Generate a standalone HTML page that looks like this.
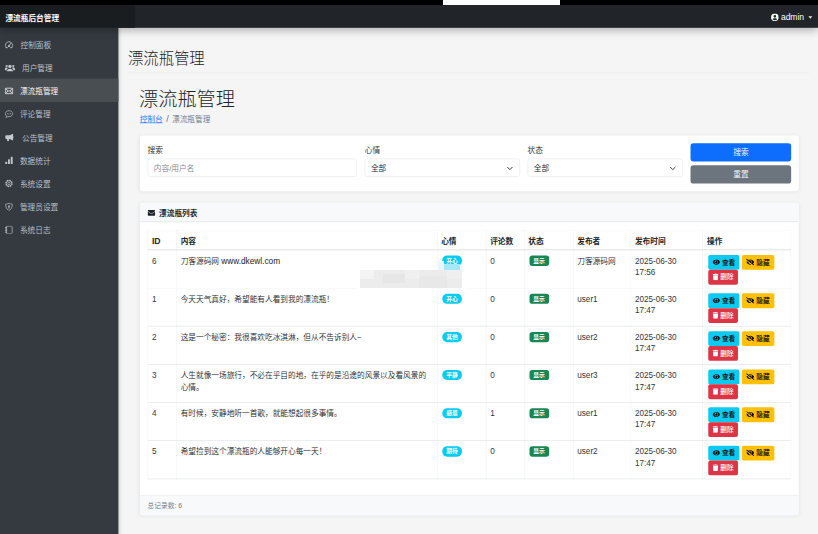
<!DOCTYPE html>
<html lang="zh-CN">
<head>
<meta charset="utf-8">
<title>漂流瓶管理 - 漂流瓶后台管理</title>
<style>
*{box-sizing:border-box}
html,body{margin:0;padding:0;width:818px;height:534px;overflow:hidden;background:#f5f5f5}
body{font-family:"Liberation Sans","Noto Sans CJK SC",sans-serif;font-size:16px;line-height:1.5;color:#212529;font-weight:350}
#app{position:absolute;left:0;top:0;width:1707px;height:1115px;transform:scale(0.4792);transform-origin:0 0;background:#f5f5f5;overflow:hidden}
/* browser strip on very top (target px) */
#strip{position:absolute;left:0;top:0;width:818px;height:5px;background:#000;z-index:50}
#mosaic b{position:absolute;display:block}
#mosaic{position:absolute;left:0;top:0;z-index:40}
#strip i{position:absolute;left:443px;top:0;width:117px;height:5px;background:#fff}
/* top bar */
.topbar{position:absolute;left:0;top:0;width:1707px;height:58.4px;background:#212529;z-index:10;box-shadow:0 4px 20px rgba(0,0,0,.32)}
.brand{position:absolute;left:0;top:0;width:281.7px;height:58.4px;background:#1a1d20;color:#fff;font-weight:700;font-size:16px;line-height:24px;padding:26.5px 0 0 11.3px}
.user{position:absolute;right:12px;top:23.7px;height:24px;color:#fff;font-size:17.8px;line-height:24px;white-space:nowrap}
.user svg{width:16px;height:16px;vertical-align:-2px;margin-right:5px;fill:#fff}
.user .caret{display:inline-block;margin-left:9px;vertical-align:3px;border-top:5px solid #e9ecef;border-left:4.5px solid transparent;border-right:4.5px solid transparent}
/* sidebar */
.sidebar{position:absolute;left:0;top:58.4px;width:246.7px;height:1060px;background:#343a40;padding-top:9.4px;z-index:5;box-shadow:2px 0 8px rgba(0,0,0,.25)}
.sidebar a{display:block;height:48.3px;padding:12.15px 0 0 10.4px;color:#c2c7d0;text-decoration:none;font-size:16px;line-height:24px;white-space:nowrap;position:relative}
.sidebar a.active{background:#494e53;color:#fff}
.sidebar a svg{position:absolute;left:10.4px;top:16.8px;width:17.5px;height:17.5px}
.sidebar a span{position:absolute;left:41.6px;top:15.8px}
.sidebar a.w span{left:45.9px}
.sidebar a.w0 span{left:42.8px}
/* main */
.main{position:absolute;left:246.7px;top:58.4px;width:1460.3px;height:1060px;background:#f5f5f5}

.main h2.pt{position:absolute;left:20.4px;top:41.4px;width:1423px;margin:0;font-size:32px;line-height:38.4px;font-weight:300;color:#212529;padding-top:3px;padding-bottom:9px;border-bottom:1px solid #e7e9eb;height:51.4px;white-space:nowrap}
.main h1{position:absolute;left:43.5px;top:125.1px;margin:0;font-size:40px;line-height:48px;font-weight:300;color:#212529;white-space:nowrap}
.bc{position:absolute;left:45px;top:179.8px;margin:0;padding:0;list-style:none;font-size:16px;line-height:24px;white-space:nowrap;color:#6c757d}
.bc a{color:#0d6efd;text-decoration:underline}
.bc .sep{display:inline-block;padding:0 7px;font-size:19px;line-height:20px}
.card{position:absolute;left:45.3px;width:1375.4px;background:#fff;border-radius:6px;box-shadow:0 1px 9px rgba(0,0,0,.07)}
.c1{top:224.2px;height:116px}
.c2{top:364.6px;height:651.7px}
.fg{position:absolute;top:16px}
.fg label{display:block;height:24px;margin-bottom:8px;font-size:16px;line-height:24px;color:#212529;position:relative;top:4px}
.ctl{height:38px;border:1px solid #dee2e6;border-radius:6px;background:#fff;padding:8.7px 12px 0;font-size:16px;line-height:24px;color:#212529;position:relative;white-space:nowrap}
.ctl.ph{color:#7d858c}
.ctl svg{position:absolute;right:12px;top:11px;width:16px;height:16px;fill:none;stroke:#343a40;stroke-width:2;stroke-linecap:round;stroke-linejoin:round}
.btn{display:block;height:38px;border-radius:6px;color:#fff;text-align:center;font-size:16px;line-height:24px;padding:8.5px 0 0}
.b-p{background:#0d6efd}
.b-s{background:#6c757d;margin-top:8px}
.ch{height:41px;background:#f8f9fa;border-bottom:2px solid #c6cace;border-radius:6px 6px 0 0;padding:10.5px 16px 0;font-weight:700;font-size:16px;line-height:24px;white-space:nowrap}
.ch svg{width:16px;height:16px;vertical-align:-2px;margin-right:8px;fill:#212529}
.cf{position:absolute;left:0;bottom:0;width:100%;height:41px;background:#f8f9fa;border-top:1px solid #c9cdd1;border-radius:0 0 6px 6px;padding:9px 16px 0;font-size:14px;line-height:24px;color:#6c757d}
table{position:absolute;left:16px;top:57px;width:1343.4px;border-collapse:collapse;table-layout:fixed;font-size:16px;line-height:24px;color:#212529}
th,td{border:1px solid #d5d9dd;border-left-color:#eef0f2;border-right-color:#eef0f2;padding:8px;vertical-align:top;text-align:left;overflow:hidden}
th{border-top-color:#f6f7f8;border-bottom-color:#bcc1c6;font-weight:700;height:41px;white-space:nowrap;padding-top:11px;padding-bottom:5px}
td{height:79.6px;padding-top:11px;padding-bottom:0}
td.l{font-size:17px;color:#32373c}
.lat{font-size:17.3px}
.bd{display:inline-block;font-size:12px;line-height:12px;font-weight:700;color:#fff;padding:4.6px 8.5px;border-radius:10px;background:#0dcaf0;vertical-align:1px;white-space:nowrap;position:relative;left:2px;top:-1px}
.bd.g{background:#198754;border-radius:6px}
.ab{font-weight:500;display:inline-block;height:31px;border-radius:4px;padding:5px 9px;font-size:14px;line-height:21px;vertical-align:top;white-space:nowrap;color:#000}
.ab svg{height:14px;vertical-align:-2px;margin-right:4px;fill:currentColor}
.ab.i{background:#0dcaf0}.ab.w{background:#ffc107;padding-right:10px}.ab.d{background:#dc3545;color:#fff}
td.op{line-height:31px;font-size:16px;padding-top:10px;padding-left:10.3px;padding-right:0;white-space:normal}
tbody tr:first-child td{border-bottom-color:#f1f2f4;border-top-color:#bcc1c6}
tbody tr:nth-child(2) td{border-top-color:#f1f2f4}
</style>
</head>
<body>
<div id="app">
  <div class="topbar">
    <div class="brand">漂流瓶后台管理</div>
    <div class="user"><svg viewBox="0 0 16 16"><path d="M8 0a8 8 0 1 0 0 16A8 8 0 0 0 8 0zm0 3.1a2.85 2.85 0 1 1 0 5.7 2.85 2.85 0 0 1 0-5.7zm0 11.1a6.2 6.2 0 0 1-4.75-2.2c.6-1.15 1.8-1.95 3.2-1.95.08 0 .16.01.23.04.42.13.86.22 1.32.22s.9-.09 1.32-.22a.8.8 0 0 1 .23-.04c1.4 0 2.6.8 3.2 1.95A6.2 6.2 0 0 1 8 14.2z"/></svg>admin<i class="caret"></i></div>
  </div>
  <div class="sidebar">
    <a href="#" class="w0"><svg viewBox="0 0 16 16" fill="none" stroke="currentColor" stroke-width="1.4" stroke-linecap="round"><path d="M2.600 13.300a7 7 0 1 1 10.800 0"/><path d="M2.600 13.300h2.600M13.400 13.300h-2.600"/><path d="M7.800 10.200l3-4.800" stroke-width="1.700"/><circle cx="7.800" cy="10.300" r="1.200" fill="currentColor"/></svg><span>控制面板</span></a>
    <a href="#" class="w"><svg viewBox="0 0 20 16" style="width:21.500px" fill="currentColor" stroke="none"><circle cx="10" cy="5" r="3.200"/><path d="M4 14.500c0-3.300 2.400-5 6-5s6 1.700 6 5z"/><circle cx="3.600" cy="4.300" r="2.100"/><circle cx="16.400" cy="4.300" r="2.100"/><path d="M0 11c0-2.300 1.400-3.600 3.600-3.600 1 0 1.800.3 2.400.8-1.600 1-2.500 2.600-2.700 4.300H0zM20 11c0-2.300-1.400-3.600-3.600-3.600-1 0-1.800.3-2.400.8 1.600 1 2.500 2.600 2.700 4.300H20z"/></svg><span>用户管理</span></a>
    <a href="#" class="active"><svg viewBox="0 0 16 16" fill="none" stroke="currentColor" stroke-width="1.400" stroke-linejoin="round"><rect x=".8" y="2.800" width="14.400" height="10.400" rx="1.600"/><path d="M1 4.200l7 4.600 7-4.600M1 12.600l5.200-4.300M15 12.600L9.800 8.300"/></svg><span>漂流瓶管理</span></a>
    <a href="#"><svg viewBox="0 0 16 16" fill="none" stroke="currentColor" stroke-width="1.300" stroke-linejoin="round"><path d="M8 1.800c4 0 7.200 2.500 7.200 5.700S12 13.200 8 13.200c-.7 0-1.400-.1-2-.2-.9.700-2.200 1.300-3.900 1.500.7-.8 1.100-1.700 1.200-2.500C1.800 10.900.8 9.300.8 7.500.8 4.300 4 1.800 8 1.800z"/><g fill="currentColor" stroke="none"><circle cx="4.800" cy="7.500" r="1"/><circle cx="8" cy="7.500" r="1"/><circle cx="11.200" cy="7.500" r="1"/></g></svg><span>评论管理</span></a>
    <a href="#" class="w"><svg viewBox="0 0 18 16" style="width:19.500px" fill="currentColor" stroke="none"><path d="M15 .8c.6 0 1 .4 1 1v4.100a1.500 1.500 0 0 1 0 2.800v4.100c0 .600-.4 1-1 1-.3 0-.5-.1-.7-.3-1.500-1.500-3.700-2.400-6.300-2.600v3.600c0 .600-.4 1-1 1H5.500c-.6 0-1-.4-1-1v-3.600H3a2 2 0 0 1-2-2v-3a2 2 0 0 1 2-2h4c3 0 5.600-.9 7.300-2.700.2-.2.400-.4.700-.4z"/></svg><span>公告管理</span></a>
    <a href="#"><svg viewBox="0 0 16 16" fill="currentColor" stroke="none"><rect x="1" y="10.500" width="3.600" height="4.500" rx=".6"/><rect x="6.200" y="6" width="3.600" height="9" rx=".6"/><rect x="11.400" y="1" width="3.600" height="14" rx=".6"/></svg><span>数据统计</span></a>
    <a href="#"><svg viewBox="0 0 16 16" fill="none" stroke="currentColor"><circle cx="8" cy="8" r="6" stroke-width="2.200" stroke-dasharray="2.700 2"/><circle cx="8" cy="8" r="5.200" stroke-width="1.200"/><circle cx="8" cy="8" r="2.300" stroke-width="1.300"/></svg><span>系统设置</span></a>
    <a href="#"><svg viewBox="0 0 16 16" fill="none" stroke="currentColor" stroke-width="1.300" stroke-linejoin="round"><path d="M8 1c2 1 4 1.500 6.200 1.700.3 5.600-1.600 10-6.200 12.300C3.400 12.700 1.500 8.300 1.800 2.700 4 2.500 6 2 8 1z"/><circle cx="8" cy="6.600" r="1.500" fill="currentColor" stroke="none"/><path d="M8 7.500v3" stroke-width="1.800" stroke-linecap="round"/></svg><span>管理员设置</span></a>
    <a href="#"><svg viewBox="0 0 16 16" fill="none" stroke="currentColor" stroke-width="1.300" stroke-linejoin="round"><rect x="3" y=".8" width="11" height="14.400" rx="1.600"/><path d="M1 3.500h2.800M1 6.500h2.800M1 9.500h2.800M1 12.500h2.800" stroke-linecap="round"/></svg><span>系统日志</span></a>
  </div>
  <div class="main">
    <h2 class="pt">漂流瓶管理</h2>
    <h1>漂流瓶管理</h1>
    <div class="bc"><a href="#">控制台</a><span class="sep">/</span>漂流瓶管理</div>
    <div class="card c1">
      <div class="fg" style="left:16px;width:437.1px"><label>搜索</label><div class="ctl ph">内容/用户名</div></div>
      <div class="fg" style="left:469.1px;width:323.9px"><label>心情</label><div class="ctl">全部<svg viewBox="0 0 16 16"><path d="M3 6l5 5 5-5"/></svg></div></div>
      <div class="fg" style="left:809px;width:323.9px"><label>状态</label><div class="ctl">全部<svg viewBox="0 0 16 16"><path d="M3 6l5 5 5-5"/></svg></div></div>
      <div class="fg" style="left:1148.9px;width:210.5px"><div class="btn b-p">搜索</div><div class="btn b-s">重置</div></div>
    </div>
    <div class="card c2">
      <div class="ch"><svg viewBox="0 0 16 16"><path d="M15.7 5.6a.2.2 0 0 1 .3.15V12.5A1.5 1.5 0 0 1 14.5 14h-13A1.5 1.5 0 0 1 0 12.500V5.750a.2.2 0 0 1 .3-.15c.7.550 1.630 1.240 4.820 3.560C5.780 9.640 6.900 10.660 8 10.650c1.110.010 2.240-1.030 2.880-1.490 3.190-2.320 4.120-3.010 4.820-3.560zM8 9.600c.720.010 1.770-.910 2.290-1.290 4.150-3.010 4.460-3.270 5.420-4.020A.75.75 0 0 0 16 3.700V3.500A1.500 1.500 0 0 0 14.500 2h-13A1.500 1.500 0 0 0 0 3.500v.2c0 .230.110.450.290.590.960.750 1.270 1.010 5.420 4.020C6.230 8.690 7.280 9.610 8 9.600z"/></svg>漂流瓶列表</div>
      <table>
        <colgroup><col style="width:60.1px"><col><col style="width:102.2px"><col style="width:79.7px"><col style="width:102.1px"><col style="width:120.4px"><col style="width:150.4px"><col style="width:184px"></colgroup>
        <thead><tr><th style="font-size:18px">ID</th><th>内容</th><th>心情</th><th>评论数</th><th>状态</th><th>发布者</th><th>发布时间</th><th>操作</th></tr></thead>
        <tbody>
          <tr><td class="l">6</td><td>刀客源码网 <span class="lat">www.dkewl.com</span></td><td><span class="bd">开心</span></td><td class="l">0</td><td><span class="bd g">显示</span></td><td>刀客源码网</td><td class="l">2025-06-30<br>17:56</td><td class="op"><a class="ab i"><svg viewBox="0 0 18 16"><path d="M17.900 7.540C16.200 4.240 12.850 2 9 2S1.800 4.240.100 7.540a1 1 0 0 0 0 .920C1.800 11.760 5.150 14 9 14s7.200-2.240 8.900-5.540a1 1 0 0 0 0-.920zM9 12.500A4.500 4.500 0 1 1 9 3.500a4.500 4.500 0 0 1 0 9zM9 5a3 3 0 0 0-.790.120 1.500 1.500 0 0 1-2.090 2.090A3 3 0 1 0 9 5z"/></svg>查看</a> <a class="ab w"><svg viewBox="0 0 20 16"><path d="M10 12.500a4.500 4.500 0 0 1-4.480-4.170L2.240 5.800c-.430.540-.830 1.110-1.150 1.740a1 1 0 0 0 0 .920C2.800 11.760 6.150 14 10 14c.840 0 1.660-.130 2.440-.330l-1.620-1.250a4.500 4.500 0 0 1-.820.080zm9.810 1.820l-3.460-2.670a10.350 10.350 0 0 0 2.540-3.190 1 1 0 0 0 0-.920C17.200 4.240 13.850 2 10 2a9.630 9.630 0 0 0-4.600 1.180L1.420.100a.5.5 0 0 0-.700.090l-.610.790a.5.5 0 0 0 .090.700l18.390 14.210a.5.5 0 0 0 .700-.090l.610-.790a.5.5 0 0 0-.090-.700zM14.070 9.880l-1.230-.950A2.960 2.960 0 0 0 9.210 5.120 1.490 1.490 0 0 1 9.500 6c0 .190-.040.380-.100.560L7.100 4.780A4.450 4.450 0 0 1 10 3.500a4.500 4.500 0 0 1 4.500 4.500c0 .680-.170 1.310-.430 1.880z"/></svg>隐藏</a> <a class="ab d"><svg viewBox="0 0 14 16"><path d="M13.500 1H9.750L9.460.420A.75.750 0 0 0 8.780 0H5.210a.74.740 0 0 0-.670.420L4.250 1H.5a.5.5 0 0 0-.5.500v1a.5.5 0 0 0 .5.500h13a.5.500 0 0 0 .5-.5v-1a.5.5 0 0 0-.5-.500zM1.660 14.590A1.500 1.500 0 0 0 3.160 16h7.680a1.500 1.500 0 0 0 1.500-1.410L13 4H1z"/></svg>删除</a></td></tr>
          <tr><td class="l">1</td><td>今天天气真好，希望能有人看到我的漂流瓶！</td><td><span class="bd">开心</span></td><td class="l">0</td><td><span class="bd g">显示</span></td><td class="l">user1</td><td class="l">2025-06-30<br>17:47</td><td class="op"><a class="ab i"><svg viewBox="0 0 18 16"><path d="M17.900 7.540C16.200 4.240 12.850 2 9 2S1.800 4.240.100 7.540a1 1 0 0 0 0 .920C1.800 11.760 5.150 14 9 14s7.200-2.240 8.900-5.540a1 1 0 0 0 0-.920zM9 12.500A4.500 4.500 0 1 1 9 3.500a4.500 4.500 0 0 1 0 9zM9 5a3 3 0 0 0-.790.120 1.500 1.500 0 0 1-2.090 2.090A3 3 0 1 0 9 5z"/></svg>查看</a> <a class="ab w"><svg viewBox="0 0 20 16"><path d="M10 12.500a4.500 4.500 0 0 1-4.480-4.170L2.240 5.800c-.430.540-.830 1.110-1.150 1.740a1 1 0 0 0 0 .920C2.800 11.760 6.150 14 10 14c.840 0 1.660-.130 2.440-.330l-1.620-1.250a4.500 4.500 0 0 1-.820.080zm9.810 1.820l-3.460-2.670a10.350 10.350 0 0 0 2.540-3.190 1 1 0 0 0 0-.920C17.200 4.240 13.850 2 10 2a9.630 9.630 0 0 0-4.600 1.180L1.420.100a.5.5 0 0 0-.700.090l-.610.790a.5.5 0 0 0 .090.700l18.390 14.210a.5.5 0 0 0 .700-.090l.610-.790a.5.5 0 0 0-.090-.700zM14.070 9.880l-1.230-.950A2.960 2.960 0 0 0 9.210 5.120 1.490 1.490 0 0 1 9.500 6c0 .190-.040.380-.100.560L7.100 4.780A4.450 4.450 0 0 1 10 3.500a4.500 4.500 0 0 1 4.500 4.500c0 .680-.170 1.310-.430 1.880z"/></svg>隐藏</a> <a class="ab d"><svg viewBox="0 0 14 16"><path d="M13.500 1H9.750L9.460.420A.75.750 0 0 0 8.780 0H5.210a.74.740 0 0 0-.670.420L4.250 1H.5a.5.5 0 0 0-.5.500v1a.5.5 0 0 0 .5.500h13a.5.500 0 0 0 .5-.5v-1a.5.5 0 0 0-.5-.500zM1.660 14.590A1.500 1.500 0 0 0 3.160 16h7.680a1.500 1.500 0 0 0 1.500-1.410L13 4H1z"/></svg>删除</a></td></tr>
          <tr><td class="l">2</td><td>这是一个秘密：我很喜欢吃冰淇淋，但从不告诉别人~</td><td><span class="bd">其他</span></td><td class="l">0</td><td><span class="bd g">显示</span></td><td class="l">user2</td><td class="l">2025-06-30<br>17:47</td><td class="op"><a class="ab i"><svg viewBox="0 0 18 16"><path d="M17.900 7.540C16.200 4.240 12.850 2 9 2S1.800 4.240.100 7.540a1 1 0 0 0 0 .920C1.800 11.760 5.150 14 9 14s7.200-2.240 8.900-5.540a1 1 0 0 0 0-.920zM9 12.500A4.500 4.500 0 1 1 9 3.500a4.500 4.500 0 0 1 0 9zM9 5a3 3 0 0 0-.790.120 1.500 1.500 0 0 1-2.090 2.090A3 3 0 1 0 9 5z"/></svg>查看</a> <a class="ab w"><svg viewBox="0 0 20 16"><path d="M10 12.500a4.500 4.500 0 0 1-4.480-4.170L2.240 5.800c-.430.540-.830 1.110-1.150 1.740a1 1 0 0 0 0 .920C2.800 11.760 6.150 14 10 14c.840 0 1.660-.130 2.440-.330l-1.620-1.250a4.500 4.500 0 0 1-.820.080zm9.810 1.820l-3.460-2.670a10.350 10.350 0 0 0 2.540-3.190 1 1 0 0 0 0-.920C17.200 4.240 13.850 2 10 2a9.630 9.630 0 0 0-4.600 1.180L1.420.100a.5.5 0 0 0-.700.090l-.610.790a.5.5 0 0 0 .090.700l18.390 14.210a.5.5 0 0 0 .700-.090l.610-.790a.5.5 0 0 0-.090-.700zM14.070 9.880l-1.230-.950A2.960 2.960 0 0 0 9.210 5.120 1.490 1.490 0 0 1 9.500 6c0 .190-.040.380-.100.560L7.100 4.780A4.450 4.450 0 0 1 10 3.500a4.500 4.500 0 0 1 4.500 4.500c0 .680-.170 1.310-.430 1.880z"/></svg>隐藏</a> <a class="ab d"><svg viewBox="0 0 14 16"><path d="M13.500 1H9.750L9.460.420A.75.750 0 0 0 8.780 0H5.210a.74.740 0 0 0-.670.420L4.250 1H.5a.5.5 0 0 0-.5.500v1a.5.5 0 0 0 .5.500h13a.5.500 0 0 0 .5-.5v-1a.5.5 0 0 0-.5-.500zM1.660 14.590A1.500 1.500 0 0 0 3.160 16h7.680a1.500 1.500 0 0 0 1.500-1.410L13 4H1z"/></svg>删除</a></td></tr>
          <tr><td class="l">3</td><td>人生就像一场旅行，不必在乎目的地，在乎的是沿途的风景以及看风景的心情。</td><td><span class="bd">平静</span></td><td class="l">0</td><td><span class="bd g">显示</span></td><td class="l">user3</td><td class="l">2025-06-30<br>17:47</td><td class="op"><a class="ab i"><svg viewBox="0 0 18 16"><path d="M17.900 7.540C16.200 4.240 12.850 2 9 2S1.800 4.240.100 7.540a1 1 0 0 0 0 .920C1.800 11.760 5.150 14 9 14s7.200-2.240 8.900-5.540a1 1 0 0 0 0-.920zM9 12.500A4.500 4.500 0 1 1 9 3.500a4.500 4.500 0 0 1 0 9zM9 5a3 3 0 0 0-.790.120 1.500 1.500 0 0 1-2.090 2.090A3 3 0 1 0 9 5z"/></svg>查看</a> <a class="ab w"><svg viewBox="0 0 20 16"><path d="M10 12.500a4.500 4.500 0 0 1-4.480-4.170L2.240 5.800c-.430.540-.830 1.110-1.150 1.740a1 1 0 0 0 0 .920C2.800 11.760 6.150 14 10 14c.840 0 1.660-.130 2.440-.330l-1.620-1.250a4.500 4.500 0 0 1-.820.080zm9.810 1.820l-3.460-2.670a10.350 10.350 0 0 0 2.540-3.190 1 1 0 0 0 0-.920C17.200 4.240 13.850 2 10 2a9.630 9.630 0 0 0-4.600 1.180L1.420.100a.5.5 0 0 0-.700.090l-.610.790a.5.5 0 0 0 .090.700l18.390 14.210a.5.5 0 0 0 .700-.090l.610-.790a.5.5 0 0 0-.090-.700zM14.070 9.880l-1.230-.950A2.960 2.960 0 0 0 9.210 5.120 1.490 1.490 0 0 1 9.500 6c0 .190-.040.380-.100.560L7.100 4.780A4.450 4.450 0 0 1 10 3.500a4.500 4.500 0 0 1 4.500 4.500c0 .680-.170 1.310-.430 1.880z"/></svg>隐藏</a> <a class="ab d"><svg viewBox="0 0 14 16"><path d="M13.500 1H9.750L9.460.420A.75.750 0 0 0 8.780 0H5.210a.74.740 0 0 0-.670.420L4.250 1H.5a.5.5 0 0 0-.5.500v1a.5.5 0 0 0 .5.500h13a.5.500 0 0 0 .5-.5v-1a.5.5 0 0 0-.5-.500zM1.660 14.590A1.500 1.500 0 0 0 3.160 16h7.680a1.500 1.500 0 0 0 1.500-1.410L13 4H1z"/></svg>删除</a></td></tr>
          <tr><td class="l">4</td><td>有时候，安静地听一首歌，就能想起很多事情。</td><td><span class="bd">感恩</span></td><td class="l">1</td><td><span class="bd g">显示</span></td><td class="l">user1</td><td class="l">2025-06-30<br>17:47</td><td class="op"><a class="ab i"><svg viewBox="0 0 18 16"><path d="M17.900 7.540C16.200 4.240 12.850 2 9 2S1.800 4.240.100 7.540a1 1 0 0 0 0 .920C1.800 11.760 5.150 14 9 14s7.200-2.240 8.900-5.540a1 1 0 0 0 0-.920zM9 12.500A4.500 4.500 0 1 1 9 3.500a4.500 4.500 0 0 1 0 9zM9 5a3 3 0 0 0-.790.120 1.500 1.500 0 0 1-2.090 2.090A3 3 0 1 0 9 5z"/></svg>查看</a> <a class="ab w"><svg viewBox="0 0 20 16"><path d="M10 12.500a4.500 4.500 0 0 1-4.480-4.170L2.240 5.800c-.430.540-.830 1.110-1.150 1.740a1 1 0 0 0 0 .920C2.800 11.760 6.150 14 10 14c.840 0 1.660-.130 2.440-.330l-1.620-1.250a4.500 4.500 0 0 1-.820.080zm9.810 1.820l-3.460-2.670a10.350 10.350 0 0 0 2.540-3.190 1 1 0 0 0 0-.920C17.200 4.240 13.850 2 10 2a9.630 9.630 0 0 0-4.600 1.180L1.420.100a.5.5 0 0 0-.700.090l-.610.790a.5.5 0 0 0 .090.700l18.390 14.210a.5.5 0 0 0 .700-.090l.610-.790a.5.5 0 0 0-.090-.700zM14.070 9.880l-1.230-.950A2.960 2.960 0 0 0 9.210 5.120 1.490 1.490 0 0 1 9.500 6c0 .190-.040.380-.100.560L7.100 4.780A4.450 4.450 0 0 1 10 3.500a4.500 4.500 0 0 1 4.500 4.500c0 .680-.170 1.310-.430 1.880z"/></svg>隐藏</a> <a class="ab d"><svg viewBox="0 0 14 16"><path d="M13.500 1H9.750L9.460.420A.75.750 0 0 0 8.780 0H5.210a.74.740 0 0 0-.670.420L4.250 1H.5a.5.5 0 0 0-.5.500v1a.5.5 0 0 0 .5.500h13a.5.500 0 0 0 .5-.5v-1a.5.5 0 0 0-.5-.500zM1.660 14.590A1.500 1.500 0 0 0 3.160 16h7.680a1.500 1.500 0 0 0 1.500-1.410L13 4H1z"/></svg>删除</a></td></tr>
          <tr><td class="l">5</td><td>希望捡到这个漂流瓶的人能够开心每一天！</td><td><span class="bd">期待</span></td><td class="l">0</td><td><span class="bd g">显示</span></td><td class="l">user2</td><td class="l">2025-06-30<br>17:47</td><td class="op"><a class="ab i"><svg viewBox="0 0 18 16"><path d="M17.900 7.540C16.200 4.240 12.850 2 9 2S1.800 4.240.100 7.540a1 1 0 0 0 0 .920C1.800 11.760 5.150 14 9 14s7.200-2.240 8.900-5.540a1 1 0 0 0 0-.920zM9 12.500A4.500 4.500 0 1 1 9 3.500a4.500 4.500 0 0 1 0 9zM9 5a3 3 0 0 0-.790.120 1.500 1.500 0 0 1-2.090 2.090A3 3 0 1 0 9 5z"/></svg>查看</a> <a class="ab w"><svg viewBox="0 0 20 16"><path d="M10 12.500a4.500 4.500 0 0 1-4.480-4.170L2.240 5.800c-.430.540-.830 1.110-1.150 1.740a1 1 0 0 0 0 .920C2.800 11.760 6.150 14 10 14c.840 0 1.660-.130 2.440-.330l-1.620-1.250a4.500 4.500 0 0 1-.820.080zm9.810 1.820l-3.460-2.670a10.350 10.350 0 0 0 2.540-3.190 1 1 0 0 0 0-.920C17.200 4.240 13.850 2 10 2a9.630 9.630 0 0 0-4.600 1.180L1.420.100a.5.5 0 0 0-.700.090l-.610.790a.5.5 0 0 0 .090.700l18.390 14.210a.5.5 0 0 0 .700-.090l.610-.790a.5.5 0 0 0-.090-.700zM14.070 9.880l-1.230-.950A2.960 2.960 0 0 0 9.210 5.120 1.490 1.490 0 0 1 9.500 6c0 .190-.040.380-.100.560L7.100 4.780A4.450 4.450 0 0 1 10 3.500a4.500 4.500 0 0 1 4.500 4.500c0 .680-.170 1.310-.430 1.880z"/></svg>隐藏</a> <a class="ab d"><svg viewBox="0 0 14 16"><path d="M13.500 1H9.750L9.460.420A.75.750 0 0 0 8.780 0H5.210a.74.740 0 0 0-.670.420L4.250 1H.5a.5.5 0 0 0-.5.500v1a.5.5 0 0 0 .5.500h13a.5.500 0 0 0 .5-.5v-1a.5.5 0 0 0-.5-.500zM1.660 14.590A1.500 1.500 0 0 0 3.160 16h7.680a1.500 1.500 0 0 0 1.500-1.410L13 4H1z"/></svg>删除</a></td></tr>
        </tbody>
      </table>
      <div class="cf">总记录数: 6</div>
    </div>
  </div>
</div>
<div id="mosaic"><b style="left:356px;top:267px;width:110px;height:24px;background:#fff"></b><b style="left:438.4px;top:261px;width:6px;height:9.2px;background:#e6f8fc"></b><b style="left:444.4px;top:263.6px;width:15.600px;height:6.600px;background:#a5e8f8"></b><b style="left:360.2px;top:269.7px;width:101.7px;height:18.3px;background:#ececec"></b><b style="left:360.2px;top:269.7px;width:14px;height:9px;background:#f4f4f4"></b><b style="left:383px;top:274px;width:22px;height:9px;background:#e6e6e6"></b><b style="left:405px;top:269.7px;width:14px;height:9px;background:#f0f0f0"></b><b style="left:419px;top:276px;width:28px;height:12px;background:#e8e8e8"></b><b style="left:447px;top:269.7px;width:14.900px;height:9px;background:#efefef"></b></div>
<div id="strip"><i></i></div>
</body>
</html>
